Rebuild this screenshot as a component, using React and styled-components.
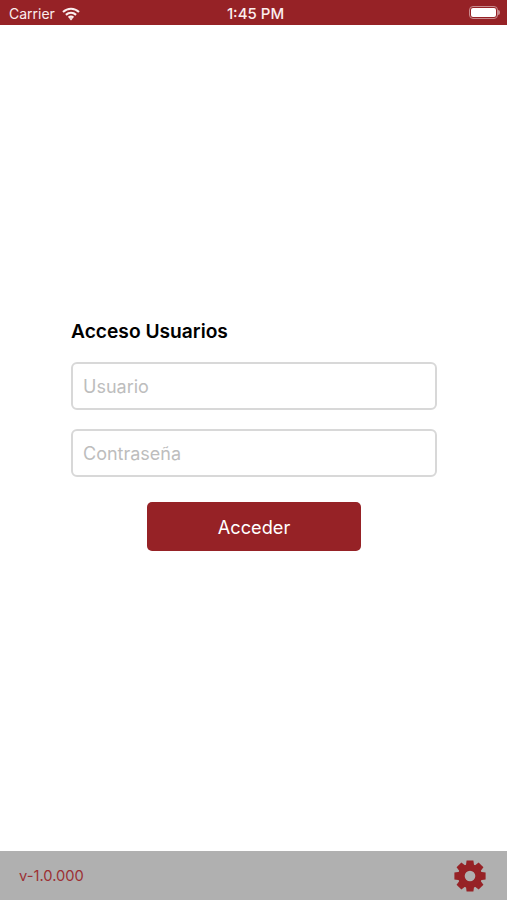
import styled, { createGlobalStyle } from "styled-components";

const RED = "#962226";

const GlobalStyle = createGlobalStyle`
  html, body {
    margin: 0;
    padding: 0;
    background: #fff;
    font-family: Inter, "Liberation Sans", sans-serif;
  }
  * {
    box-sizing: border-box;
  }
`;

function WifiIcon() {
  return (
    <svg width="18" height="14" viewBox="0 0 18 14" fill="none" stroke="#fbeeee" strokeWidth="2.1">
      <path d="M1 4.9C5.6 .6 12.4 .6 17 4.9" />
      <path d="M3.9 7.9C6.9 5.2 11.1 5.2 14.1 7.9" />
      <path d="M6.6 10.6C8 9.4 10 9.4 11.4 10.6" />
      <path d="M9 13.6L7.2 11.6C8.2 10.9 9.8 10.9 10.8 11.6Z" fill="#fbeeee" stroke="none" />
    </svg>
  );
}

function GearIcon() {
  const teeth = [0, 45, 90, 135, 180, 225, 270, 315];
  return (
    <svg width="32" height="32" viewBox="0 0 32 32">
      {teeth.map((deg) => (
        <path key={deg} d="M12.6 0.4H19.4L20.4 8H11.6Z" fill={RED} transform={`rotate(${deg} 16 16)`} />
      ))}
      <circle cx="16" cy="16" r="12" fill={RED} />
      <circle cx="16" cy="16" r="5.3" fill="#b0b0b0" />
    </svg>
  );
}

export default function App() {
  return (
    <Page>
      <GlobalStyle />
      <StatusBar>
        <Carrier>
          Carrier
          <WifiIcon />
        </Carrier>
        <Clock>1:45 PM</Clock>
        <Battery>
          <BatteryFill />
        </Battery>
      </StatusBar>

      <Main>
        <Form>
          <Title>Acceso Usuarios</Title>
          <Field placeholder="Usuario" />
          <Field placeholder="Contraseña" type="password" />
          <Submit>Acceder</Submit>
        </Form>
      </Main>

      <Footer>
        <Version>v-1.0.000</Version>
        <GearIcon />
      </Footer>
    </Page>
  );
}

const Page = styled.div`
  width: 507px;
  height: 900px;
  display: flex;
  flex-direction: column;
  overflow: hidden;
`;

const StatusBar = styled.div`
  height: 25px;
  flex-shrink: 0;
  background-color: ${RED};
  color: #fbeeee;
  display: grid;
  grid-template-columns: 1fr auto 1fr;
  align-items: center;
  padding: 2px 9px 0 9px;
  font-size: 14px;
`;

const Carrier = styled.div`
  display: flex;
  align-items: center;
  gap: 7px;
  font-size: 14px;
`;

const Clock = styled.div`
  font-weight: 500;
  font-size: 15px;
  margin-left: 4px;
`;

const Battery = styled.div`
  position: relative;
  justify-self: end;
  width: 29px;
  height: 13px;
  border: 1px solid #c98b8e;
  border-radius: 4px;
  padding: 1px;
  margin-top: -2px;

  &::after {
    content: "";
    position: absolute;
    top: 3px;
    right: -3px;
    width: 2px;
    height: 5px;
    background: #c98b8e;
    border-radius: 0 2px 2px 0;
  }
`;

const BatteryFill = styled.div`
  height: 100%;
  background: #fff;
  border-radius: 2px;
`;

const Main = styled.main`
  flex: 1;
  padding: 295px 70px 0 71px;
`;

const Form = styled.form`
  display: flex;
  flex-direction: column;
`;

const Title = styled.div`
  font-size: 19.2px;
  line-height: 22px;
  font-weight: 600;
  color: #000;
  margin-bottom: 20px;
`;

const Field = styled.input`
  width: 100%;
  height: 48px;
  border: 2px solid #d8d8d8;
  border-radius: 6px;
  padding: 0 10px;
  margin-bottom: 19px;
  font-family: inherit;
  font-size: 18px;
  outline: none;

  &::placeholder {
    color: #bdbdbd;
    opacity: 1;
  }
`;

const Submit = styled.button`
  width: 214px;
  height: 49px;
  margin: 6px auto 0;
  border: none;
  border-radius: 5px;
  background-color: ${RED};
  color: #fff;
  font-family: inherit;
  font-size: 18.2px;
  cursor: pointer;
`;

const Footer = styled.footer`
  height: 49px;
  flex-shrink: 0;
  background-color: #b0b0b0;
  display: flex;
  align-items: center;
  justify-content: space-between;
  padding: 0 21px 0 19px;
`;

const Version = styled.div`
  color: #9c3034;
  font-size: 14.7px;
`;
